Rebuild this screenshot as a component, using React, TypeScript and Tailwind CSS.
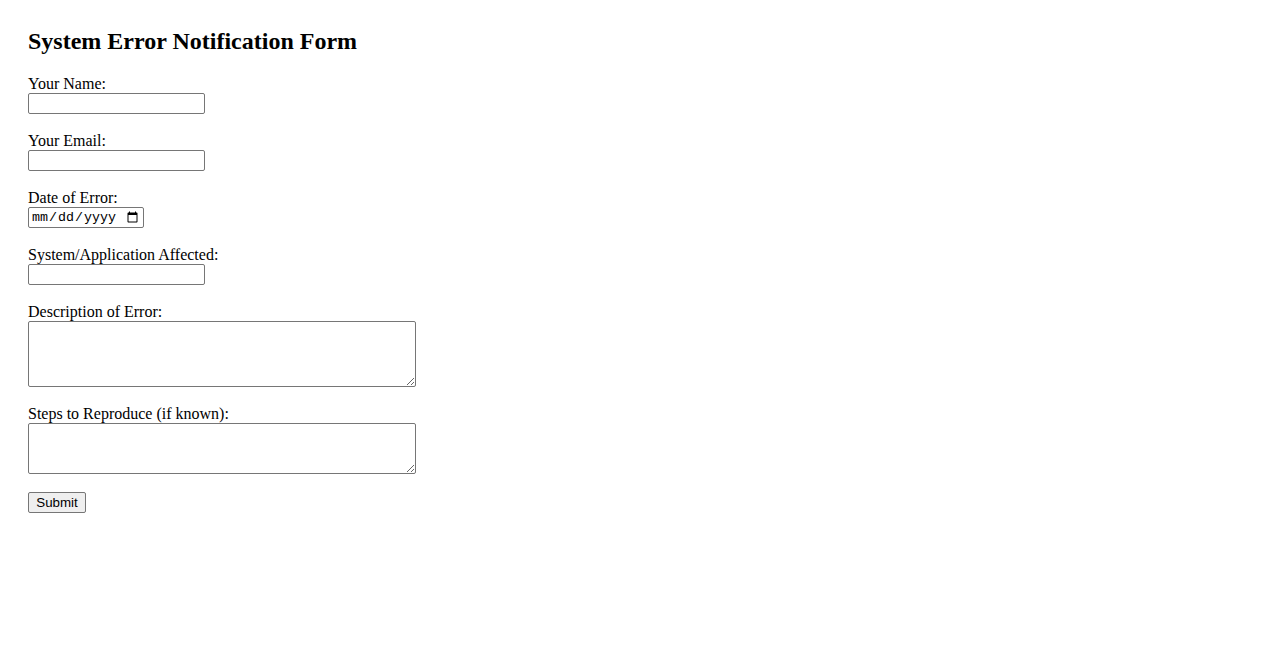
import React from "react";

const inputCls =
  "block h-[21px] w-[177px] border border-[#767676] rounded-[2px] bg-white px-[2px] text-[13.33px] font-['Liberation_Sans',Arial,sans-serif]";

const Field = ({ label, children }: { label: string; children: React.ReactNode }) => (
  <div className="mb-[18px]">
    <label className="block h-[18px] text-base leading-[18px]">{label}</label>
    {children}
  </div>
);

const App = () => {
  return (
    <div className="min-h-screen bg-white p-7 text-black font-['Liberation_Serif','Times_New_Roman',serif]">
      <h2 className="mb-[21px] text-[24px] font-bold leading-[26px]">System Error Notification Form</h2>
      <form onSubmit={(e) => e.preventDefault()}>
        <Field label="Your Name:">
          <input type="text" className={inputCls} />
        </Field>
        <Field label="Your Email:">
          <input type="email" className={inputCls} />
        </Field>
        <Field label="Date of Error:">
          <input
            type="date"
            className="block h-[21px] w-[116px] border border-[#767676] rounded-[2px] bg-white px-[2px] text-[13.33px] font-['Liberation_Mono',monospace]"
          />
        </Field>
        <Field label="System/Application Affected:">
          <input type="text" className={inputCls} />
        </Field>
        <Field label="Description of Error:">
          <textarea className="block h-[66px] w-[388px] border border-[#767676] rounded-[2px] bg-white p-[2px] text-[13.33px] font-['Liberation_Mono',monospace]" />
        </Field>
        <Field label="Steps to Reproduce (if known):">
          <textarea className="block h-[51px] w-[388px] border border-[#767676] rounded-[2px] bg-white p-[2px] text-[13.33px] font-['Liberation_Mono',monospace]" />
        </Field>
        <button
          type="submit"
          className="block h-[21px] w-[58px] border border-[#767676] rounded-[2px] bg-[#efefef] text-[13.33px] leading-[19px] font-['Liberation_Sans',Arial,sans-serif]"
        >
          Submit
        </button>
      </form>
    </div>
  );
};

export default App;
